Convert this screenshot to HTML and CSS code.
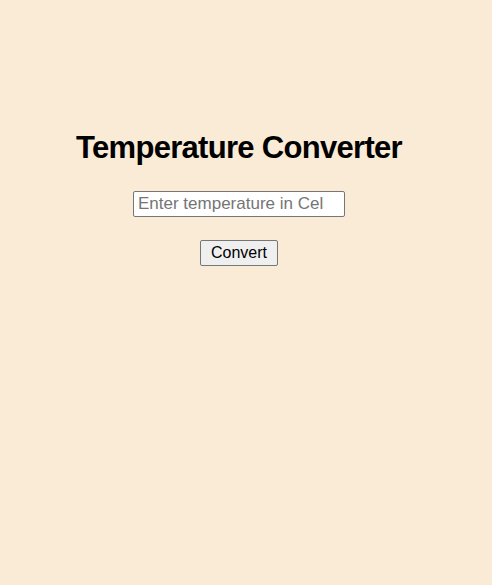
FILE: index.html
```html
<!DOCTYPE html>
<html>
<head>
<meta charset="utf-8">
<title>Temperature Converter</title>
<link rel="stylesheet" href="styles.css">
</head>
<body>
<div class="container">
  <h1 class="title">Temperature Converter</h1>
  <input class="temp-input" type="text" placeholder="Enter temperature in Celsius">
  <button class="convert-btn">Convert</button>
</div>
</body>
</html>
```
FILE: styles.css
```css
html, body {
  margin: 0;
  padding: 0;
  background: #faebd7;
  font-family: "Liberation Sans", Arial, sans-serif;
}
.container {
  display: flex;
  flex-direction: column;
  align-items: center;
  padding: 112px 14px 0 0;
}
.title {
  font-size: 31px;
  font-weight: bold;
  letter-spacing: -0.7px;
  margin: 18px 0 25px;
  color: #000;
}
.temp-input {
  width: 212px;
  height: 26px;
  box-sizing: border-box;
  font-family: "Liberation Sans", Arial, sans-serif;
  font-size: 17px;
  padding: 1px 20px 1px 4px;
  border: 1px solid #767676;
  border-radius: 2px;
  background: #fff;
  margin: 0 0 23px;
}
.temp-input::placeholder {
  color: #757575;
}
.convert-btn {
  font-family: "Liberation Sans", Arial, sans-serif;
  font-size: 16px;
  height: 26px;
  padding: 1px 10px;
  border: 1px solid #767676;
  border-radius: 2px;
  background: #efefef;
  color: #000;
}
```
